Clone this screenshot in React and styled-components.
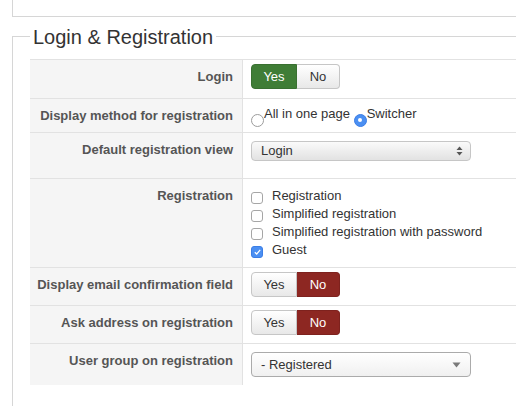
import styled, { createGlobalStyle } from "styled-components";

const GlobalStyle = createGlobalStyle`
  html, body {
    margin: 0;
    padding: 0;
    background: #fff;
    overflow: hidden;
  }
  body {
    font-family: "Liberation Sans", Arial, sans-serif;
    font-size: 13px;
    color: #333;
  }
  * {
    box-sizing: border-box;
  }
`;

const Page = styled.div`
  padding-left: 12px;
`;

const TopPanel = styled.div`
  height: 17px;
  border: 1px solid #d6d6d6;
  border-top: none;
  border-right: none;
`;

const Fieldset = styled.fieldset`
  margin: 3px 0 0;
  padding: 0 0 40px 17px;
  border: 1px solid #d6d6d6;
  border-right: none;
  min-width: 0;
`;

const Legend = styled.legend`
  padding: 5px 3px 4px;
  font-size: 20px;
  line-height: 24px;
  color: #333;
`;

const Table = styled.div`
  margin-top: 6px;
`;

const Row = styled.div`
  display: grid;
  grid-template-columns: 213px 1fr;
  height: ${(p) => p.$height}px;
  border-top: 1px solid #e2e2e2;
`;

const Label = styled.div`
  background: #f5f5f5;
  border-right: 1px solid #e2e2e2;
  padding: 8px 9px 0 0;
  text-align: right;
  font-weight: bold;
  line-height: 18px;
  color: #555;
`;

const Control = styled.div`
  padding: ${(p) => p.$top}px 0 0 8px;
  line-height: 18px;
`;

const Toggle = styled.div`
  display: inline-flex;
  height: 25px;
`;

const ToggleButton = styled.span`
  display: flex;
  align-items: center;
  justify-content: center;
  width: ${(p) => p.$width}px;
  height: 25px;
  border: 1px solid #c6c6c6;
  color: #333;
  background: linear-gradient(#ffffff, #e8e8e8);

  &:first-child {
    border-radius: 4px 0 0 4px;
  }
  &:last-child {
    border-radius: 0 4px 4px 0;
    border-left: none;
  }

  ${(p) =>
    p.$on === "yes" &&
    `
    color: #fff;
    background: #3f7d36;
    border-color: #397031;
  `}
  ${(p) =>
    p.$on === "no" &&
    `
    color: #fff;
    background: #8d2722;
    border-color: #7e221e;
  `}
`;

const RadioLine = styled.div`
  white-space: nowrap;
`;

const Radio = styled.span`
  display: inline-flex;
  align-items: center;
  justify-content: center;
  width: 13px;
  height: 13px;
  border-radius: 50%;
  vertical-align: -4px;
  border: 1px solid ${(p) => (p.$checked ? "#3b7ee6" : "#9c9c9c")};
  background: ${(p) => (p.$checked ? "#4b8ff2" : "#fff")};

  &::after {
    content: "";
    width: 4px;
    height: 4px;
    border-radius: 50%;
    background: ${(p) => (p.$checked ? "#fff" : "transparent")};
  }
`;

const CheckList = styled.div`
  display: flex;
  flex-direction: column;
`;

const CheckItem = styled.div`
  display: flex;
  align-items: flex-start;
  gap: 9px;
  height: 18px;
`;

const Checkbox = styled.span`
  display: flex;
  align-items: center;
  justify-content: center;
  flex: none;
  width: 12px;
  height: 12px;
  margin-top: 5px;
  border-radius: 3px;
  border: 1px solid ${(p) => (p.$checked ? "#3b7ee6" : "#a6a6a6")};
  background: ${(p) => (p.$checked ? "#4b8ff2" : "#fff")};
`;

const Select = styled.div`
  display: flex;
  align-items: center;
  justify-content: space-between;
  width: 220px;
  height: ${(p) => (p.$tall ? 25 : 20)}px;
  padding: 0 ${(p) => (p.$tall ? 9 : 7)}px 0 9px;
  border: 1px solid ${(p) => (p.$tall ? "#ababab" : "#c6c6c6")};
  border-radius: 4px;
  background: ${(p) =>
    p.$tall
      ? "linear-gradient(#ffffff, #f0f0f0)"
      : "linear-gradient(#fafafa, #e2e2e2)"};
  color: #333;
`;

function CheckMark() {
  return (
    <svg width="7" height="6" viewBox="0 0 7 6">
      <path d="M0.8 3.2 L2.7 5 L6.2 0.8" fill="none" stroke="#fff" strokeWidth="1.2" />
    </svg>
  );
}

function UpDownArrows() {
  return (
    <svg width="7" height="10" viewBox="0 0 7 10">
      <path d="M3.5 0.5 L6.5 4 L0.5 4 Z" fill="#555" />
      <path d="M0.5 6 L6.5 6 L3.5 9.5 Z" fill="#555" />
    </svg>
  );
}

function DownArrow() {
  return (
    <svg width="9" height="6" viewBox="0 0 9 6">
      <path d="M0.5 0.5 L8.5 0.5 L4.5 5.5 Z" fill="#7a7a7a" />
    </svg>
  );
}

const registrationTypes = [
  { label: "Registration", checked: false },
  { label: "Simplified registration", checked: false },
  { label: "Simplified registration with password", checked: false },
  { label: "Guest", checked: true },
];

function YesNo({ value }) {
  return (
    <Toggle>
      <ToggleButton $width={46} $on={value === "yes" ? "yes" : undefined}>
        Yes
      </ToggleButton>
      <ToggleButton $width={43} $on={value === "no" ? "no" : undefined}>
        No
      </ToggleButton>
    </Toggle>
  );
}

export default function App() {
  return (
    <Page>
      <GlobalStyle />
      <TopPanel />
      <Fieldset>
        <Legend>Login &amp; Registration</Legend>
        <Table>
          <Row $height={39}>
            <Label>Login</Label>
            <Control $top={4}>
              <YesNo value="yes" />
            </Control>
          </Row>
          <Row $height={34}>
            <Label>Display method for registration</Label>
            <Control $top={6}>
              <RadioLine>
                <Radio />All in one page <Radio $checked />Switcher
              </RadioLine>
            </Control>
          </Row>
          <Row $height={46}>
            <Label>Default registration view</Label>
            <Control $top={8}>
              <Select>
                <span>Login</span>
                <UpDownArrows />
              </Select>
            </Control>
          </Row>
          <Row $height={89}>
            <Label>Registration</Label>
            <Control $top={8}>
              <CheckList>
                {registrationTypes.map((item) => (
                  <CheckItem key={item.label}>
                    <Checkbox $checked={item.checked}>
                      {item.checked && <CheckMark />}
                    </Checkbox>
                    {item.label}
                  </CheckItem>
                ))}
              </CheckList>
            </Control>
          </Row>
          <Row $height={38}>
            <Label>Display email confirmation field</Label>
            <Control $top={4}>
              <YesNo value="no" />
            </Control>
          </Row>
          <Row $height={38}>
            <Label>Ask address on registration</Label>
            <Control $top={4}>
              <YesNo value="no" />
            </Control>
          </Row>
          <Row $height={42}>
            <Label>User group on registration</Label>
            <Control $top={8}>
              <Select $tall>
                <span>- Registered</span>
                <DownArrow />
              </Select>
            </Control>
          </Row>
        </Table>
      </Fieldset>
    </Page>
  );
}
